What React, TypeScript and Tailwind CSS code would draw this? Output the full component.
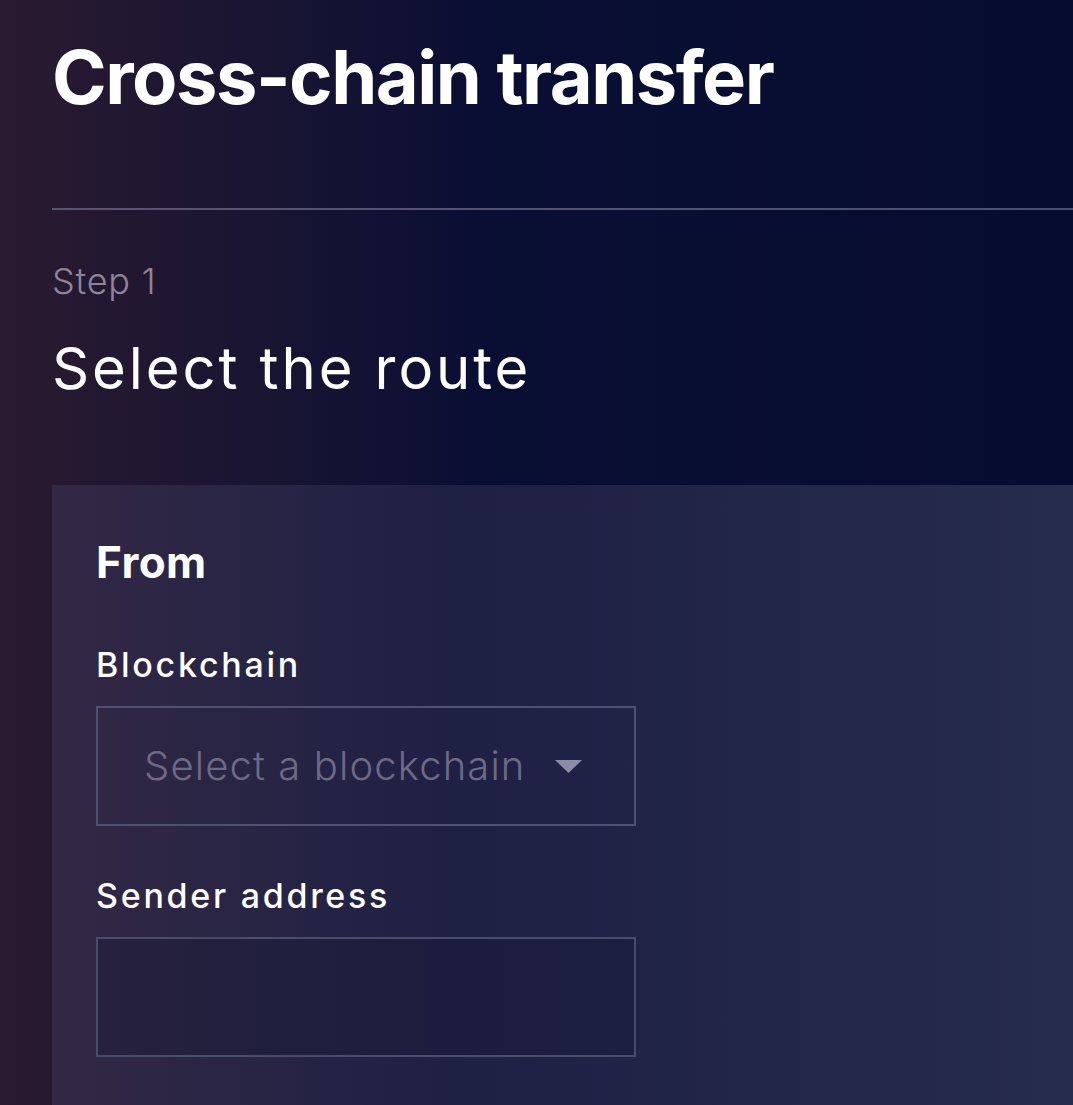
export default function App() {
  return (
    <div
      className="h-screen w-full overflow-hidden bg-linear-to-r from-[#2a1a30] via-[#0a0e34] via-45% to-[#060c2f] pl-[52px] text-white"
      style={{ fontFamily: 'Inter, "Noto Sans", sans-serif' }}
    >
      {/* Page header */}
      <h1 className="pt-[40px] text-[74px] font-bold leading-none tracking-[-0.02em]">Cross-chain transfer</h1>
      <div className="mt-[94px] h-[2px] w-full bg-linear-to-r from-[#5a5470] to-[#4a5070]" />

      <div className="mt-[53px] text-[36px] font-light leading-none tracking-[0.02em] text-[#8e8599]">Step 1</div>
      <h2 className="mt-[40px] text-[58px] font-normal leading-none tracking-[0.05em]">Select the route</h2>

      {/* Route card */}
      <div className="mt-[88px] min-h-[700px] bg-linear-to-r from-[#322844] via-[#1e2044] via-40% to-[#262c4d] pl-[44px] pt-[55px]">
        <h3 className="text-[44px] font-bold leading-none tracking-[0.01em]">From</h3>

        <label className="mt-[64px] block text-[34px] font-medium leading-none tracking-[0.08em]">Blockchain</label>
        <button className="mt-[24px] flex h-[120px] w-[540px] items-center border-2 border-[#4f5172] pl-[46px] text-left">
          <span className="text-[40px] font-light leading-none tracking-[0.028em] text-[#6d6a86]">Select a blockchain</span>
          <svg className="ml-[29px]" width="27" height="13" viewBox="0 0 27 13">
            <polygon points="0,0 27,0 13.5,13" fill="#8b8da5" />
          </svg>
        </button>

        <label className="mt-[53px] block text-[34px] font-medium leading-none tracking-[0.08em]">Sender address</label>
        <div className="mt-[24px] h-[120px] w-[540px] border-2 border-[#4a4c6c] bg-[#1a1a38]/40" />
      </div>
    </div>
  )
}
